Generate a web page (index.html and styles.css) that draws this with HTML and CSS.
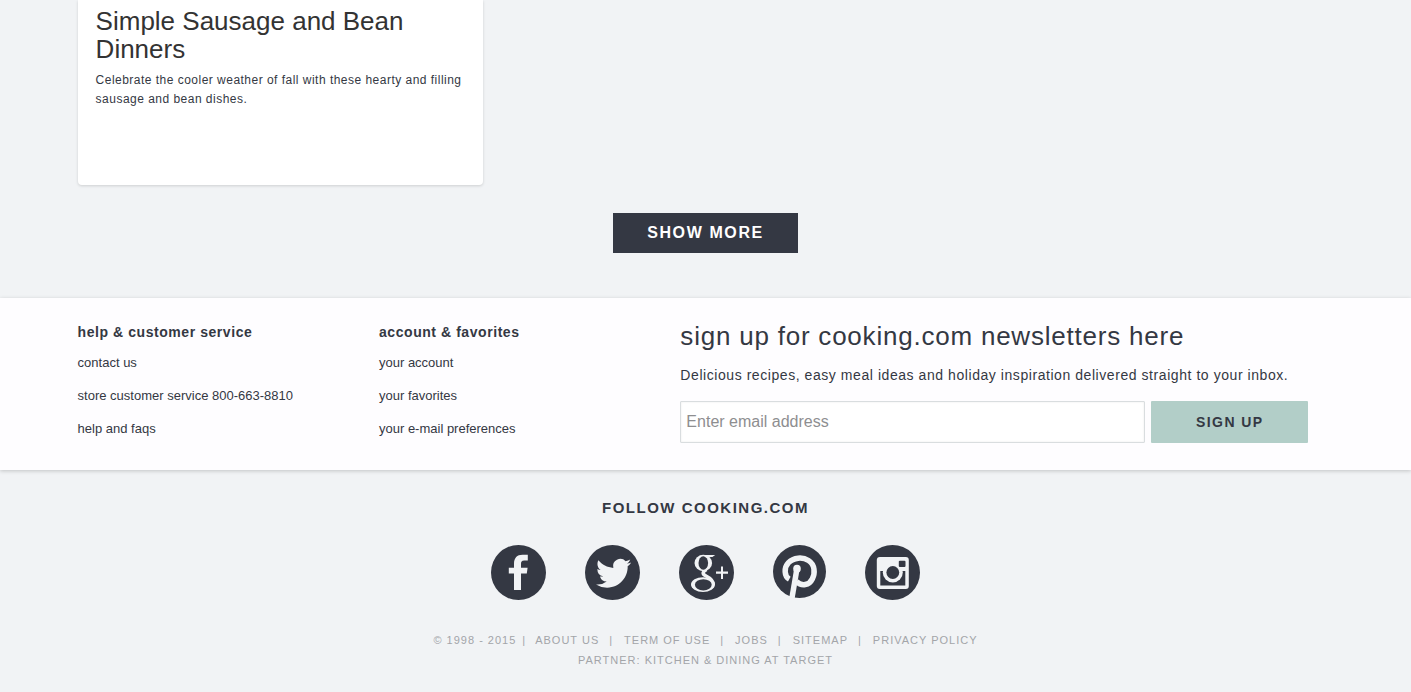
FILE: index.html
```html
<!DOCTYPE html>
<html lang="en">
<head>
<meta charset="UTF-8">
<meta name="viewport" content="width=device-width, initial-scale=1.0">
<title>Cooking.com</title>
<link rel="stylesheet" href="styles.css">
</head>
<body>
    <main class="container">
        <div class="cards">
            <article class="card">
                <h2>Simple Sausage and Bean Dinners</h2>
                <p>Celebrate the cooler weather of fall with these hearty and filling sausage and bean dishes.</p>
            </article>
        </div>
        <button type="button" class="show-more">SHOW MORE</button>
    </main>

    <section class="info">
        <div class="container info-grid">
            <div class="links">
                <h3>help &amp; customer service</h3>
                <ul>
                    <li><a href="#">contact us</a></li>
                    <li><a href="#">store customer service 800-663-8810</a></li>
                    <li><a href="#">help and faqs</a></li>
                </ul>
            </div>
            <div class="links">
                <h3>account &amp; favorites</h3>
                <ul>
                    <li><a href="#">your account</a></li>
                    <li><a href="#">your favorites</a></li>
                    <li><a href="#">your e-mail preferences</a></li>
                </ul>
            </div>
            <form class="newsletter">
                <h2>sign up for cooking.com newsletters here</h2>
                <p><label for="email">Delicious recipes, easy meal ideas and holiday inspiration delivered straight to your inbox.</label></p>
                <div class="signup">
                    <input type="email" id="email" placeholder="Enter email address">
                    <button type="submit">SIGN UP</button>
                </div>
            </form>
        </div>
    </section>

    <footer class="footer">
        <h4>FOLLOW COOKING.COM</h4>
        <div class="social">
            <a href="#" aria-label="Facebook">
                <svg width="55" height="55" viewBox="0 0 55 55">
                    <circle class="disc" cx="27.5" cy="27.5" r="27.5"/>
                    <path class="mark" d="M23 45V28.4H17.8V22.8H23V19C23 13 26 9.8 31.5 9.8H36.8V15.6H33.2C30.6 15.6 30 16.8 30 19V22.8H36.6L35.8 28.4H30V45Z"/>
                </svg>
            </a>
            <a href="#" aria-label="Twitter">
                <svg width="55" height="55" viewBox="0 0 55 55">
                    <circle class="disc" cx="27.5" cy="27.5" r="27.5"/>
                    <path class="mark" transform="translate(11 10.7) scale(1.47)" d="M23.953 4.57a10 10 0 01-2.825.775 4.958 4.958 0 002.163-2.723c-.951.555-2.005.959-3.127 1.184a4.92 4.92 0 00-8.384 4.482C7.69 8.095 4.067 6.13 1.64 3.162a4.822 4.822 0 00-.666 2.475c0 1.71.87 3.213 2.188 4.096a4.904 4.904 0 01-2.228-.616v.06a4.923 4.923 0 003.946 4.827 4.996 4.996 0 01-2.212.085 4.936 4.936 0 004.604 3.417 9.867 9.867 0 01-6.102 2.105c-.39 0-.779-.023-1.17-.067a13.995 13.995 0 007.557 2.209c9.053 0 13.998-7.496 13.998-13.985 0-.21 0-.42-.015-.63A9.935 9.935 0 0024 4.59z"/>
                </svg>
            </a>
            <a href="#" aria-label="Google Plus">
                <svg width="55" height="55" viewBox="0 0 55 55">
                    <circle class="disc" cx="27.5" cy="27.5" r="27.5"/>
                    <path class="line neck" d="M27.5 24.5C23 27 23.2 29 27 31C31 33 34.2 35 34.2 39.5"/>
                    <ellipse class="mark" cx="24.3" cy="18" rx="8.8" ry="8.2"/>
                    <ellipse class="disc" cx="24.3" cy="18" rx="4.8" ry="6.8"/>
                    <path class="mark" d="M24 9.9H36.2L33.4 11.9H29.5L27 12.4Z"/>
                    <ellipse class="mark" cx="24" cy="39.6" rx="12" ry="7.4"/>
                    <ellipse class="disc" cx="24.3" cy="39.8" rx="8.4" ry="5.6"/>
                    <path class="mark" d="M42 21.5H44V26.5H49V28.7H44V34H42V28.7H37V26.5H42Z"/>
                </svg>
            </a>
            <a href="#" aria-label="Pinterest">
                <svg width="53" height="53" viewBox="0 0 53 53">
                    <circle class="disc" cx="26.5" cy="26.5" r="26.5"/>
                    <path class="line" d="M16.3 34.2C11.3 31.5 10.6 22.8 15.5 17.7C20.5 12.3 29.7 11.8 35.5 15.5C42 19.7 42.3 28 39.3 34C36.3 40.2 28.8 41.8 23.4 36.6"/>
                    <path class="line" d="M23.9 24L18.8 54"/>
                    <ellipse class="mark" cx="24" cy="23.7" rx="3.8" ry="4"/>
                </svg>
            </a>
            <a href="#" aria-label="Instagram">
                <svg width="55" height="55" viewBox="0 0 55 55">
                    <circle class="disc" cx="27.5" cy="27.5" r="27.5"/>
                    <rect class="mark" x="11.8" y="12" width="32" height="32" rx="3"/>
                    <rect class="disc" x="15.3" y="26" width="25" height="14.5"/>
                    <circle class="mark" cx="27.8" cy="27.5" r="10"/>
                    <circle class="disc" cx="27.8" cy="27.5" r="6.4"/>
                    <rect class="disc" x="33.8" y="15.8" width="6.7" height="6.2" rx="1"/>
                </svg>
            </a>
        </div>
        <ul class="legal">
            <li>© 1998 - 2015</li>
            <li><a href="#">ABOUT US</a></li>
            <li><a href="#">TERM OF USE</a></li>
            <li><a href="#">JOBS</a></li>
            <li><a href="#">SITEMAP</a></li>
            <li><a href="#">PRIVACY POLICY</a></li>
        </ul>
        <p class="partner"><a href="#">PARTNER: KITCHEN &amp; DINING AT TARGET</a></p>
    </footer>
</body>
</html>
```

FILE: styles.css
```css
* {
    box-sizing: border-box;
}
body {
    margin: 0;
    background-color: #f1f3f5;
    color: #343843;
    font-family: "Liberation Sans", Arial, sans-serif;
}
h2, h3, h4, p, ul {
    margin: 0;
    padding: 0;
}
ul {
    list-style: none;
}
a {
    color: inherit;
    text-decoration: none;
}
button {
    border: 0;
    font-family: inherit;
    font-weight: bold;
    letter-spacing: 0.1em;
    cursor: pointer;
}
.container {
    width: 89%;
    margin: 0 auto;
}

/* recipe cards */
.cards {
    display: grid;
    grid-template-columns: repeat(3, 1fr);
    gap: 20px;
}
.card {
    min-height: 185px;
    padding: 7px 18px 20px;
    background-color: #fff;
    border-radius: 0 0 4px 4px;
    box-shadow: 0 1px 3px rgba(0, 0, 0, 0.15);
}
.card h2 {
    margin-bottom: 8px;
    color: #333;
    font-size: 26px;
    font-weight: normal;
    line-height: 28px;
}
.card p {
    font-size: 12px;
    line-height: 19px;
    letter-spacing: 0.04em;
}
.show-more {
    display: block;
    height: 40px;
    margin: 28px auto 45px;
    padding: 0 34px;
    background-color: #343843;
    color: #fff;
    font-size: 16px;
}

/* links and newsletter */
.info {
    padding: 24px 0 25px;
    background-color: #fefdff;
    box-shadow: 0 1px 4px rgba(0, 0, 0, 0.2);
}
.info-grid {
    display: grid;
    grid-template-columns: 24% 24% 50%;
}
.links h3 {
    margin-bottom: 4px;
    font-size: 14px;
    line-height: 20px;
    letter-spacing: 0.04em;
}
.links li {
    font-size: 13px;
    line-height: 33px;
}
.newsletter h2 {
    font-size: 26px;
    font-weight: normal;
    line-height: 28px;
    letter-spacing: 0.03em;
}
.newsletter p {
    margin: 15px 0 16px;
    font-size: 14px;
    line-height: 20px;
    letter-spacing: 0.04em;
}
.signup {
    display: flex;
    gap: 6px;
}
.signup input {
    flex: 3;
    min-width: 0;
    height: 42px;
    padding: 0 5px;
    border: 1px solid #d9dddf;
    border-radius: 1px;
    background-color: #fff;
    box-shadow: inset 0 0 2px rgba(0, 0, 0, 0.1);
    color: #343843;
    font-family: inherit;
    font-size: 16px;
}
.signup input::placeholder {
    color: #8e8e90;
}
.signup button {
    flex-basis: 25%;
    border-radius: 1px;
    background-color: #b2cec8;
    color: #343843;
    font-size: 14px;
}

/* footer */
.footer {
    padding: 28px 0 20px;
    text-align: center;
}
.footer h4 {
    margin-bottom: 27px;
    font-size: 15px;
    line-height: 20px;
    letter-spacing: 0.1em;
}
.social {
    display: flex;
    justify-content: center;
    gap: 39px;
    margin-bottom: 30px;
}
.social svg {
    display: block;
}
.disc {
    fill: #343843;
}
.mark {
    fill: #f1f3f5;
}
.line {
    fill: none;
    stroke: #f1f3f5;
    stroke-width: 5.5;
}
.neck {
    stroke-width: 3.5;
}
.legal {
    display: flex;
    justify-content: center;
}
.legal,
.partner {
    color: #a3a5a9;
    font-size: 11px;
    line-height: 20px;
    letter-spacing: 1px;
}
.legal li + li::before {
    content: "|";
    margin: 0 11px 0 10px;
}
.legal li:first-child + li::before {
    margin: 0 9px 0 6px;
}
```
